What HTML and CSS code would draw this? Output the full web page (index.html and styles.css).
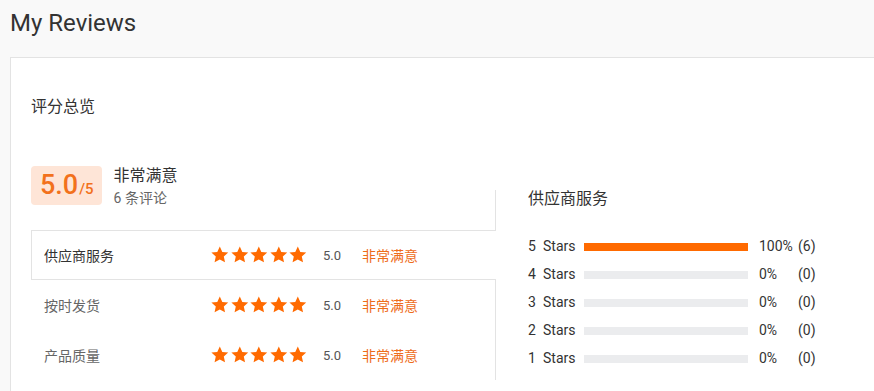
FILE: index.html
```html
<!DOCTYPE html>
<html lang="zh-CN">
<head>
<meta charset="UTF-8">
<meta name="viewport" content="width=device-width, initial-scale=1.0">
<title>My Reviews</title>
<link rel="stylesheet" href="styles.css">
</head>
<body>

<div class="page-head">
    <h1>My Reviews</h1>
</div>

<div class="review-card">
    <h2 class="section-title">评分总览</h2>

    <div class="overview">
        <div class="overview-left">
            <div class="summary">
                <div class="score-badge">
                    <span class="score-big">5.0</span><span class="score-max">/5</span>
                </div>
                <div class="summary-text">
                    <div class="summary-level">非常满意</div>
                    <div class="summary-count">6 条评论</div>
                </div>
            </div>

            <div class="tab-list">
                <div class="tab-row active">
                    <span class="tab-label">供应商服务</span>
                    <span class="stars">
                        <svg viewBox="0 0 24 24"><path d="M12 1.6l3.1 6.6 7.2.8-5.4 4.9 1.5 7.1L12 17.4l-6.4 3.6 1.5-7.1L1.7 9l7.2-.8z"/></svg>
                        <svg viewBox="0 0 24 24"><path d="M12 1.6l3.1 6.6 7.2.8-5.4 4.9 1.5 7.1L12 17.4l-6.4 3.6 1.5-7.1L1.7 9l7.2-.8z"/></svg>
                        <svg viewBox="0 0 24 24"><path d="M12 1.6l3.1 6.6 7.2.8-5.4 4.9 1.5 7.1L12 17.4l-6.4 3.6 1.5-7.1L1.7 9l7.2-.8z"/></svg>
                        <svg viewBox="0 0 24 24"><path d="M12 1.6l3.1 6.6 7.2.8-5.4 4.9 1.5 7.1L12 17.4l-6.4 3.6 1.5-7.1L1.7 9l7.2-.8z"/></svg>
                        <svg viewBox="0 0 24 24"><path d="M12 1.6l3.1 6.6 7.2.8-5.4 4.9 1.5 7.1L12 17.4l-6.4 3.6 1.5-7.1L1.7 9l7.2-.8z"/></svg>
                    </span>
                    <span class="tab-score">5.0</span>
                    <span class="tab-level">非常满意</span>
                </div>
                <div class="tab-row">
                    <span class="tab-label">按时发货</span>
                    <span class="stars">
                        <svg viewBox="0 0 24 24"><path d="M12 1.6l3.1 6.6 7.2.8-5.4 4.9 1.5 7.1L12 17.4l-6.4 3.6 1.5-7.1L1.7 9l7.2-.8z"/></svg>
                        <svg viewBox="0 0 24 24"><path d="M12 1.6l3.1 6.6 7.2.8-5.4 4.9 1.5 7.1L12 17.4l-6.4 3.6 1.5-7.1L1.7 9l7.2-.8z"/></svg>
                        <svg viewBox="0 0 24 24"><path d="M12 1.6l3.1 6.6 7.2.8-5.4 4.9 1.5 7.1L12 17.4l-6.4 3.6 1.5-7.1L1.7 9l7.2-.8z"/></svg>
                        <svg viewBox="0 0 24 24"><path d="M12 1.6l3.1 6.6 7.2.8-5.4 4.9 1.5 7.1L12 17.4l-6.4 3.6 1.5-7.1L1.7 9l7.2-.8z"/></svg>
                        <svg viewBox="0 0 24 24"><path d="M12 1.6l3.1 6.6 7.2.8-5.4 4.9 1.5 7.1L12 17.4l-6.4 3.6 1.5-7.1L1.7 9l7.2-.8z"/></svg>
                    </span>
                    <span class="tab-score">5.0</span>
                    <span class="tab-level">非常满意</span>
                </div>
                <div class="tab-row">
                    <span class="tab-label">产品质量</span>
                    <span class="stars">
                        <svg viewBox="0 0 24 24"><path d="M12 1.6l3.1 6.6 7.2.8-5.4 4.9 1.5 7.1L12 17.4l-6.4 3.6 1.5-7.1L1.7 9l7.2-.8z"/></svg>
                        <svg viewBox="0 0 24 24"><path d="M12 1.6l3.1 6.6 7.2.8-5.4 4.9 1.5 7.1L12 17.4l-6.4 3.6 1.5-7.1L1.7 9l7.2-.8z"/></svg>
                        <svg viewBox="0 0 24 24"><path d="M12 1.6l3.1 6.6 7.2.8-5.4 4.9 1.5 7.1L12 17.4l-6.4 3.6 1.5-7.1L1.7 9l7.2-.8z"/></svg>
                        <svg viewBox="0 0 24 24"><path d="M12 1.6l3.1 6.6 7.2.8-5.4 4.9 1.5 7.1L12 17.4l-6.4 3.6 1.5-7.1L1.7 9l7.2-.8z"/></svg>
                        <svg viewBox="0 0 24 24"><path d="M12 1.6l3.1 6.6 7.2.8-5.4 4.9 1.5 7.1L12 17.4l-6.4 3.6 1.5-7.1L1.7 9l7.2-.8z"/></svg>
                    </span>
                    <span class="tab-score">5.0</span>
                    <span class="tab-level">非常满意</span>
                </div>
            </div>
        </div>

        <div class="overview-right">
            <div class="detail-title">供应商服务</div>
            <div class="dist-row">
                <span class="dist-num">5</span><span class="dist-word">Stars</span>
                <span class="dist-bar"><span class="dist-fill" style="width: 100%"></span></span>
                <span class="dist-pct">100%</span><span class="dist-count">(6)</span>
            </div>
            <div class="dist-row">
                <span class="dist-num">4</span><span class="dist-word">Stars</span>
                <span class="dist-bar"><span class="dist-fill" style="width: 0%"></span></span>
                <span class="dist-pct">0%</span><span class="dist-count">(0)</span>
            </div>
            <div class="dist-row">
                <span class="dist-num">3</span><span class="dist-word">Stars</span>
                <span class="dist-bar"><span class="dist-fill" style="width: 0%"></span></span>
                <span class="dist-pct">0%</span><span class="dist-count">(0)</span>
            </div>
            <div class="dist-row">
                <span class="dist-num">2</span><span class="dist-word">Stars</span>
                <span class="dist-bar"><span class="dist-fill" style="width: 0%"></span></span>
                <span class="dist-pct">0%</span><span class="dist-count">(0)</span>
            </div>
            <div class="dist-row">
                <span class="dist-num">1</span><span class="dist-word">Stars</span>
                <span class="dist-bar"><span class="dist-fill" style="width: 0%"></span></span>
                <span class="dist-pct">0%</span><span class="dist-count">(0)</span>
            </div>
        </div>
    </div>
</div>

</body>
</html>
```

FILE: styles.css
```css
/* Reviews overview */
body {
    margin: 0;
    background-color: #f9f9f9;
    font-family: Roboto, "Noto Sans CJK SC", sans-serif;
    color: #333;
    overflow: hidden;
}
.page-head {
    height: 57px;
    box-sizing: border-box;
    padding: 7px 10px 0;
}
.page-head h1 {
    margin: 0;
    font-size: 24px;
    line-height: 32px;
    font-weight: 400;
    color: #333;
}
.review-card {
    margin-left: 10px;
    border-top: 1px solid #e3e3e3;
    border-left: 1px solid #e3e3e3;
    background-color: #fff;
    padding: 37px 0 40px 20px;
}
.section-title {
    margin: 0;
    font-size: 16px;
    line-height: 24px;
    font-weight: normal;
}
.overview {
    display: flex;
    margin-top: 47px;
}
.overview-left {
    width: 465px;
    flex-shrink: 0;
}
.summary {
    display: flex;
    align-items: flex-start;
    height: 39px;
}
.score-badge {
    display: flex;
    align-items: baseline;
    height: 39px;
    box-sizing: border-box;
    padding: 3px 8px 0 9px;
    background-color: #fee5d7;
    border-radius: 4px;
    color: #f2711c;
}
.score-big {
    font-size: 27px;
    line-height: 32px;
    font-weight: 500;
}
.score-max {
    font-size: 15px;
    font-weight: 500;
    margin-left: 1px;
}
.summary-text {
    margin-left: 12px;
}
.summary-level {
    font-size: 16px;
    line-height: 20px;
    color: #333;
}
.summary-count {
    font-size: 14px;
    line-height: 24px;
    color: #666;
}
.tab-list {
    margin-top: -15px;
    padding-top: 40px;
    border-right: 1px solid #e3e3e3;
}
.tab-row {
    display: flex;
    align-items: center;
    height: 50px;
    box-sizing: border-box;
    padding-left: 12px;
    border: 1px solid transparent;
    border-right: none;
    font-size: 14px;
}
.tab-row.active {
    border-color: #e3e3e3;
    background-color: #fff;
    margin-right: -1px;
    position: relative;
}
.tab-label {
    width: 166px;
    color: #666;
}
.tab-row.active .tab-label {
    color: #333;
}
.stars {
    display: flex;
    width: 113px;
}
.stars svg {
    width: 19.6px;
    height: 20px;
    fill: #ff6a00;
}
.tab-score {
    width: 39px;
    font-size: 13px;
    color: #555;
}
.tab-level {
    color: #ee6c1a;
}
.overview-right {
    margin-left: 32px;
    padding-top: 21px;
}
.detail-title {
    font-size: 16px;
    line-height: 24px;
    margin-bottom: 21px;
}
.dist-row {
    display: flex;
    align-items: center;
    height: 28px;
    font-size: 14px;
    color: #333;
}
.dist-num {
    width: 15px;
}
.dist-word {
    width: 41px;
}
.dist-bar {
    width: 164px;
    height: 8px;
    margin-top: 2px;
    background-color: #ebecee;
}
.dist-fill {
    display: block;
    height: 100%;
    background-color: #ff6a00;
}
.dist-pct {
    width: 39px;
    margin-left: 11px;
}
```
